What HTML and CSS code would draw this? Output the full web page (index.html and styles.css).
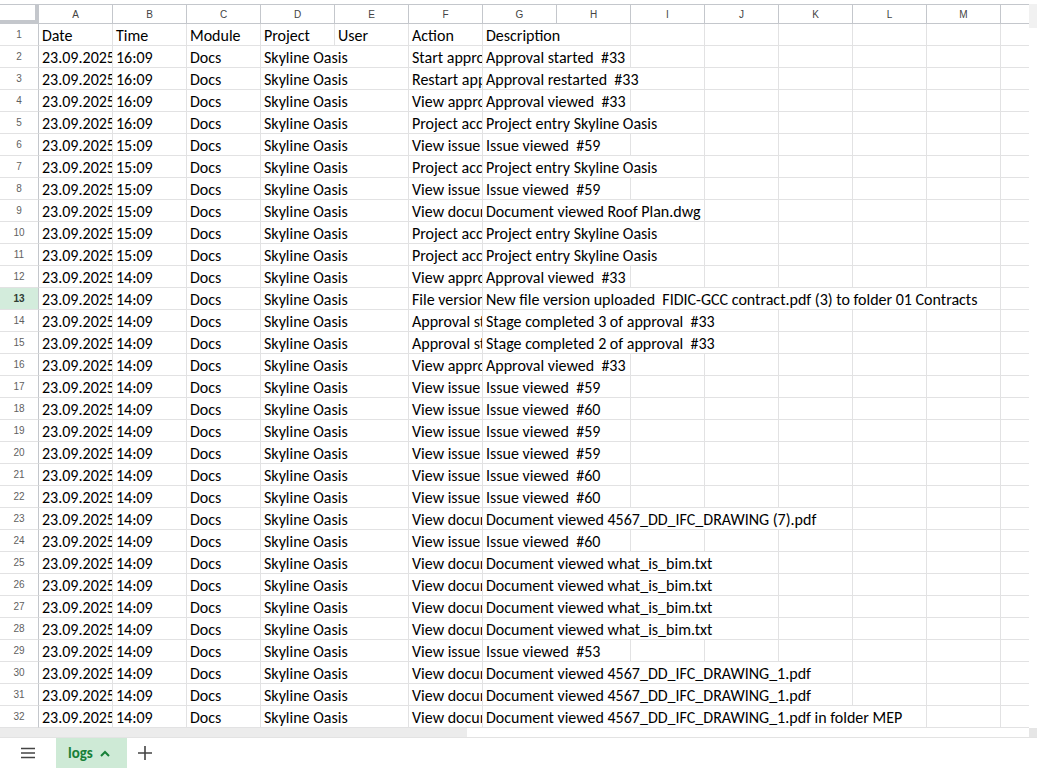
FILE: index.html
```html
<!DOCTYPE html>
<html lang="en">
<head>
    <meta charset="UTF-8">
    <meta name="viewport" content="width=device-width, initial-scale=1.0">
    <title>logs</title>
    <link rel="stylesheet" href="styles.css">
</head>
<body>
    <div class="app">
        <div class="sheet">
            <div class="grid" id="grid"></div>
            <div class="vscroll"><div class="vthumb"></div></div>
        </div>

        <div class="hscroll">
            <div class="hthumb"></div>
            <div class="scroll-corner"></div>
        </div>

        <div class="tabbar">
            <div class="menu-btn">
                <svg width="14" height="12" viewBox="0 0 14 12">
                    <path d="M0 1.5h14M0 6h14M0 10.5h14" stroke="#444" stroke-width="1.5" fill="none"/>
                </svg>
            </div>
            <div class="tab">
                <span>logs</span>
                <svg width="10" height="7" viewBox="0 0 10 7">
                    <polyline points="1,6 5,2 9,6" stroke="#188038" stroke-width="2" fill="none"/>
                </svg>
            </div>
            <div class="add-btn">
                <svg width="14" height="14" viewBox="0 0 14 14">
                    <path d="M7 0v14M0 7h14" stroke="#444" stroke-width="1.6" fill="none"/>
                </svg>
            </div>
        </div>
    </div>

    <script>
        // Журнал действий: время, действие, описание
        const logs = [
            ['16:09', 'Start approval', 'Approval started  #33'],
            ['16:09', 'Restart approval', 'Approval restarted  #33'],
            ['16:09', 'View approval', 'Approval viewed  #33'],
            ['16:09', 'Project access', 'Project entry Skyline Oasis'],
            ['15:09', 'View issue', 'Issue viewed  #59'],
            ['15:09', 'Project access', 'Project entry Skyline Oasis'],
            ['15:09', 'View issue', 'Issue viewed  #59'],
            ['15:09', 'View document', 'Document viewed Roof Plan.dwg'],
            ['15:09', 'Project access', 'Project entry Skyline Oasis'],
            ['15:09', 'Project access', 'Project entry Skyline Oasis'],
            ['14:09', 'View approval', 'Approval viewed  #33'],
            ['14:09', 'File version upload', 'New file version uploaded  FIDIC-GCC contract.pdf (3) to folder 01 Contracts'],
            ['14:09', 'Approval stage completed', 'Stage completed 3 of approval  #33'],
            ['14:09', 'Approval stage completed', 'Stage completed 2 of approval  #33'],
            ['14:09', 'View approval', 'Approval viewed  #33'],
            ['14:09', 'View issue', 'Issue viewed  #59'],
            ['14:09', 'View issue', 'Issue viewed  #60'],
            ['14:09', 'View issue', 'Issue viewed  #59'],
            ['14:09', 'View issue', 'Issue viewed  #59'],
            ['14:09', 'View issue', 'Issue viewed  #60'],
            ['14:09', 'View issue', 'Issue viewed  #60'],
            ['14:09', 'View document', 'Document viewed 4567_DD_IFC_DRAWING (7).pdf'],
            ['14:09', 'View issue', 'Issue viewed  #60'],
            ['14:09', 'View document', 'Document viewed what_is_bim.txt'],
            ['14:09', 'View document', 'Document viewed what_is_bim.txt'],
            ['14:09', 'View document', 'Document viewed what_is_bim.txt'],
            ['14:09', 'View document', 'Document viewed what_is_bim.txt'],
            ['14:09', 'View issue', 'Issue viewed  #53'],
            ['14:09', 'View document', 'Document viewed 4567_DD_IFC_DRAWING_1.pdf'],
            ['14:09', 'View document', 'Document viewed 4567_DD_IFC_DRAWING_1.pdf'],
            ['14:09', 'View document', 'Document viewed 4567_DD_IFC_DRAWING_1.pdf in folder MEP']
        ];

        const grid = document.getElementById('grid');
        const letters = 'ABCDEFGHIJKLM'.split('');
        const colCount = letters.length + 1;
        const colWidth = 74;
        const activeRow = 13;

        function add(cls, text, span) {
            const d = document.createElement('div');
            d.className = cls;
            if (text) d.textContent = text;
            if (span > 1) d.style.gridColumn = 'span ' + span;
            grid.appendChild(d);
            return d;
        }

        // Сколько столбцов нужно тексту, чтобы поместиться
        const measure = document.createElement('span');
        measure.className = 'measure';
        document.body.appendChild(measure);

        function neededCols(text) {
            measure.textContent = text;
            return Math.ceil((measure.offsetWidth + 6) / colWidth);
        }

        // Заголовки столбцов
        add('corner');
        letters.forEach(l => add('col-head', l));
        add('col-head edge');

        const rows = [['Date', 'Time', 'Module', 'Project', 'User', 'Action', 'Description']]
            .concat(logs.map(r => ['23.09.2025', r[0], 'Docs', 'Skyline Oasis', '', r[1], r[2]]));

        rows.forEach((r, i) => {
            add('row-head' + (i + 1 === activeRow ? ' active' : ''), String(i + 1));

            const vals = r.concat(new Array(colCount - r.length).fill(''));
            let c = 0;
            while (c < colCount) {
                const t = vals[c];
                let n = 1;
                // Длинный текст перетекает в пустые ячейки справа
                if (t) {
                    const need = neededCols(t);
                    while (n < need && c + n < colCount && !vals[c + n]) n++;
                }
                add(c + n === colCount ? 'cell edge' : 'cell', t, n);
                c += n;
            }
        });
    </script>
</body>
</html>
```
FILE: styles.css
```css
* {
    margin: 0;
    padding: 0;
    box-sizing: border-box;
}

body {
    font-family: Calibri, Carlito, Lato, sans-serif;
    background-color: #fff;
    overflow: hidden;
}

.app {
    height: 768px;
    display: flex;
    flex-direction: column;
    padding-top: 4px;
}

.sheet {
    display: flex;
}

.grid {
    width: 1029px;
    display: grid;
    grid-template-columns: 39px repeat(13, 74px) 28px;
    grid-template-rows: 19px;
    grid-auto-rows: 22px;
    border-top: 1px solid #c4c7cc;
}

.corner {
    border-right: 4px solid #c4c7cc;
    border-bottom: 4px solid #c4c7cc;
}

.col-head {
    display: flex;
    align-items: center;
    justify-content: center;
    border-right: 1px solid #c4c7cc;
    border-bottom: 1px solid #c4c7cc;
    font-family: 'Liberation Sans', Arial, sans-serif;
    font-size: 10px;
    color: #444;
}

.row-head {
    display: flex;
    align-items: center;
    justify-content: center;
    border-right: 1px solid #c4c7cc;
    border-bottom: 1px solid #e2e2e3;
    font-family: 'Liberation Sans', Arial, sans-serif;
    font-size: 10px;
    color: #5f5f5f;
}

.row-head.active {
    background-color: #d3ecdc;
    color: #2f3b33;
    font-weight: bold;
}

.cell {
    border-right: 1px solid #e2e2e3;
    border-bottom: 1px solid #e2e2e3;
    padding: 2px 0 0 3px;
    font-size: 16px;
    line-height: 20px;
    white-space: pre;
    overflow: hidden;
    color: #000;
}

.edge {
    border-right: none;
}

.measure {
    position: absolute;
    visibility: hidden;
    white-space: pre;
    font-size: 16px;
}

.vscroll {
    width: 8px;
}

.vthumb {
    height: 24px;
    background-color: #f1f1f1;
}

.hscroll {
    height: 10px;
    display: flex;
    border-bottom: 1px solid #e3e3e3;
}

.hthumb {
    width: 467px;
    background-color: #ececec;
}

.scroll-corner {
    width: 8px;
    margin-left: auto;
    background-color: #e6e6e6;
}

.tabbar {
    height: 30px;
    display: flex;
    padding-left: 14px;
}

.menu-btn {
    width: 28px;
    display: flex;
    align-items: center;
    justify-content: center;
}

.tab {
    width: 71px;
    margin-left: 14px;
    padding-left: 12px;
    display: flex;
    align-items: center;
    gap: 7px;
    background-color: #ceead6;
    color: #188038;
    font-size: 15px;
    font-weight: bold;
}

.add-btn {
    margin-left: 11px;
    display: flex;
    align-items: center;
}
```
